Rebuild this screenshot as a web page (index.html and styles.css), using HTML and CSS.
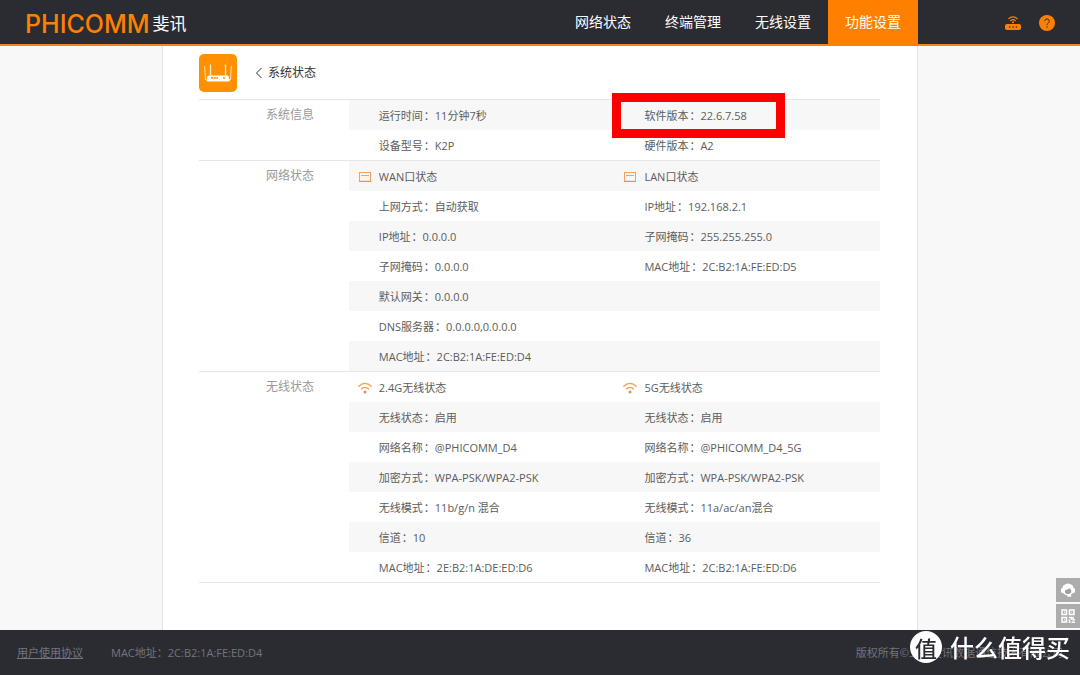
FILE: index.html
```html
<!DOCTYPE html>
<html lang="zh-CN">
<head>
<meta charset="utf-8">
<meta name="viewport" content="width=device-width, initial-scale=1">
<title>系统状态</title>
<link rel="stylesheet" href="styles.css">
</head>
<body>
<header class="topbar">
  <a class="logo" href="#"><span class="logo-latin">PHICOMM</span><span class="logo-cn">斐讯</span></a>
  <nav class="nav">
    <a href="#">网络状态</a>
    <a href="#">终端管理</a>
    <a href="#">无线设置</a>
    <a class="active" href="#">功能设置</a>
  </nav>
  <div class="tools">
    <a href="#" aria-label="路由器">
      <svg width="16" height="16" viewBox="0 0 16 16" fill="none" stroke="#ff8000" stroke-width="1.2" stroke-linecap="round">
        <path d="M3.8 3.6a6 6 0 0 1 8.4 0M5.6 5.6a3.6 3.6 0 0 1 4.8 0"/>
        <circle cx="8" cy="7.2" r="1" fill="#ff8000" stroke="none"/>
        <rect x="0" y="9" width="16" height="6" rx="2" fill="#ff8000" stroke="none"/>
        <path d="M4.6 12h.1M8 12h.1M11.3 12h.1" stroke="#2b2c32" stroke-width="1.5"/>
      </svg>
    </a>
    <a href="#" aria-label="帮助">
      <svg width="16" height="16" viewBox="0 0 16 16" fill="none" stroke="#2b2c32">
        <circle cx="8" cy="8" r="8" fill="#ff8000" stroke="none"/>
        <path d="M5.7 6.2a2.3 2.3 0 1 1 3.5 2C8.3 8.800 8 9.200 8 10.200"/>
        <circle cx="8" cy="12" r=".7" fill="#2b2c32" stroke="none"/>
      </svg>
    </a>
  </div>
</header>

<main class="panel">
  <div class="heading">
    <svg width="38" height="38" viewBox="0 0 38 38">
      <rect width="38" height="38" rx="5" fill="#ff9100"/>
      <path d="M8 24.500h22l1.200 1.500-1 1.500H8.200L7 26z" fill="#fff"/>
      <rect x="8" y="21.500" width="22" height="5" rx="2" fill="#fff"/>
      <path d="M11.500 10.500v11.500M26.500 10.500v11.500" stroke="#ffe9cc" stroke-width="1.300"/>
      <path d="M5.700 12l.8 14M32.300 12l-.8 14" stroke="#ffe0b8" stroke-width="1"/>
      <path d="M12 24h7" stroke="#ff7a00" stroke-width="1.500" stroke-dasharray="2 .7"/>
      <circle cx="25" cy="24" r="1" fill="#ff9100"/>
    </svg>
    <a class="back" href="#">
      <svg width="8" height="12" viewBox="0 0 8 12" fill="none" stroke="#333"><path d="M6.500 1L1.500 6l5 5"/></svg>
      <span>系统状态</span>
    </a>
  </div>

  <section class="group">
    <h2>系统信息</h2>
    <div class="rows odd">
      <div class="row"><p>运行时间<i>：</i>11分钟7秒</p><p class="marked">软件版本<i>：</i>22.6.7.58</p></div>
      <div class="row"><p>设备型号<i>：</i>K2P</p><p>硬件版本<i>：</i>A2</p></div>
    </div>
  </section>

  <section class="group">
    <h2>网络状态</h2>
    <div class="rows odd">
      <div class="row">
        <h3><svg width="14" height="12" viewBox="0 0 14 12" fill="none" stroke="#f3a064"><rect x="1.500" y="1.500" width="11" height="9"/><path d="M3 4.500h8"/><path d="M1 10.300h12" stroke="#f08b43"/></svg>WAN口状态</h3>
        <h3><svg width="14" height="12" viewBox="0 0 14 12" fill="none" stroke="#f3a064"><rect x="1.500" y="1.500" width="11" height="9"/><path d="M3 4.500h8"/><path d="M1 10.300h12" stroke="#f08b43"/></svg>LAN口状态</h3>
      </div>
      <div class="row"><p>上网方式<i>：</i>自动获取</p><p>IP地址<i>：</i>192.168.2.1</p></div>
      <div class="row"><p>IP地址<i>：</i>0.0.0.0</p><p>子网掩码<i>：</i>255.255.255.0</p></div>
      <div class="row"><p>子网掩码<i>：</i>0.0.0.0</p><p>MAC地址<i>：</i>2C:B2:1A:FE:ED:D5</p></div>
      <div class="row"><p>默认网关<i>：</i>0.0.0.0</p></div>
      <div class="row"><p>DNS服务器<i>：</i>0.0.0.0,0.0.0.0</p></div>
      <div class="row"><p>MAC地址<i>：</i>2C:B2:1A:FE:ED:D4</p></div>
    </div>
  </section>

  <section class="group">
    <h2>无线状态</h2>
    <div class="rows even">
      <div class="row">
        <h3><svg width="14" height="12" viewBox="0 0 14 12" fill="none" stroke="#f3a05c" stroke-width="1.300" stroke-linecap="round"><path d="M.8 4.200C4.300.4 9.700.4 13.200 4.200M3.500 7c2-2.300 5-2.300 7 0"/><circle cx="7" cy="10" r="1.500" fill="#f08b43" stroke="none"/></svg>2.4G无线状态</h3>
        <h3><svg width="14" height="12" viewBox="0 0 14 12" fill="none" stroke="#f3a05c" stroke-width="1.300" stroke-linecap="round"><path d="M.8 4.200C4.300.4 9.700.4 13.200 4.200M3.500 7c2-2.300 5-2.300 7 0"/><circle cx="7" cy="10" r="1.500" fill="#f08b43" stroke="none"/></svg>5G无线状态</h3>
      </div>
      <div class="row"><p>无线状态<i>：</i>启用</p><p>无线状态<i>：</i>启用</p></div>
      <div class="row"><p>网络名称<i>：</i>@PHICOMM_D4</p><p>网络名称<i>：</i>@PHICOMM_D4_5G</p></div>
      <div class="row"><p>加密方式<i>：</i>WPA-PSK/WPA2-PSK</p><p>加密方式<i>：</i>WPA-PSK/WPA2-PSK</p></div>
      <div class="row"><p>无线模式<i>：</i>11b/g/n 混合</p><p>无线模式<i>：</i>11a/ac/an混合</p></div>
      <div class="row"><p>信道<i>：</i>10</p><p>信道<i>：</i>36</p></div>
      <div class="row"><p>MAC地址<i>：</i>2E:B2:1A:DE:ED:D6</p><p>MAC地址<i>：</i>2C:B2:1A:FE:ED:D6</p></div>
    </div>
  </section>
</main>

<footer class="footer">
  <a href="#">用户使用协议</a>
  <span>MAC地址：2C:B2:1A:FE:ED:D4</span>
  <span class="copyright">版权所有©上海斐讯数据通信技术有限公司</span>
</footer>

<div class="floating">
  <button type="button" aria-label="客服">
    <svg width="14" height="14" viewBox="0 0 14 14">
      <circle cx="7" cy="6.500" r="6" fill="#fff"/>
      <rect x="0" y="5" width="3" height="5" rx="1.500" fill="#fff"/><rect x="11" y="5" width="3" height="5" rx="1.500" fill="#fff"/>
      <path d="M4 7.500l5-2.200 1.200 2v2.200L8 11H5.600L4 9.500z" fill="#a0a0a0"/>
      <path d="M7 12.800h2.500" stroke="#fff" stroke-width="1.800" stroke-linecap="round"/>
    </svg>
  </button>
  <button type="button" aria-label="二维码">
    <svg width="14" height="14" viewBox="0 0 14 14" fill="none" stroke="#fff" stroke-width="1.500">
      <path d="M1 1h4.500v4.500H1zM8.500 1H13v4.500H8.500zM1 8.500h4.500V13H1z"/>
      <path d="M3 3.300h.8M10.500 3.300h.8M3 10.800h.8M7.800 8.500h2.500v2.200M8.500 10.500V14M12 7.800v3h2M10.500 13.200H14"/>
    </svg>
  </button>
</div>

<div class="watermark"><span class="seal">值</span><span>什么值得买</span></div>
</body>
</html>
```

FILE: styles.css
```css
*, *::after { box-sizing: border-box; }

body {
  margin: 0;
  min-height: 100vh;
  display: flex;
  flex-direction: column;
  background: #f8f8f8;
  color: #5c5c5c;
  font: 11px/32px "Open Sans", "Noto Sans CJK SC", sans-serif;
}

a { color: inherit; text-decoration: none; }
svg { display: block; flex: none; }
h2, h3, p { margin: 0; font-size: 11px; font-weight: 400; }

/* colon between a label and its value */
i { margin-left: 1px; font-style: normal; }

.topbar {
  display: flex;
  height: 46px;
  background: #2b2c32;
  border-bottom: 2px solid #fb8418;
}

.logo {
  display: flex;
  align-items: center;
  gap: 3px;
  padding-left: 25px;
  padding-top: 3px;
}
.logo-latin { color: #ff8000; font: 500 25px/44px Inter, sans-serif; }
.logo-cn { color: #fff; font-size: 17px; }

.nav { display: flex; margin-left: auto; }
.nav a {
  width: 90px;
  height: 46px;
  color: #fff;
  font-size: 14px;
  line-height: 44px;
  text-align: center;
}
.nav .active { background: #ff8000; }

.tools {
  display: flex;
  align-items: center;
  justify-content: flex-end;
  gap: 18px;
  width: 15%;
  padding-right: 25px;
  padding-top: 2px;
}

.panel {
  flex: 1;
  width: 70%;
  margin: 0 auto;
  padding: 0 37px 47px 36px;
  background: #fff;
  border: solid #e2e2e2;
  border-width: 0 1px;
}

.heading {
  display: flex;
  align-items: center;
  gap: 18px;
  height: 53px;
}
.back { display: flex; align-items: center; gap: 5px; color: #333; font-size: 12px; }

.group {
  display: flex;
  border-top: 1px solid #e6e6e6;
}
.group:last-child { border-bottom: 1px solid #e6e6e6; }
.group h2 {
  width: 22%;
  padding-left: 67px;
  color: #999;
  font-size: 12px;
  line-height: 30px;
}
.rows { flex: 1; }
.row { display: grid; grid-template-columns: 1fr 1fr; height: 30px; }
.row p { padding-left: 30px; }
.row h3 { display: flex; align-items: center; padding-left: 9px; }
.row h3 svg { margin-right: 7px; }
.odd .row:nth-child(odd), .even .row:nth-child(even) { background: #f7f7f7; }

.marked { position: relative; }
.marked::after {
  content: "";
  position: absolute;
  top: -7px;
  left: -2px;
  width: 173px;
  height: 45px;
  border: 9px solid #f00;
}

.footer {
  display: flex;
  gap: 28px;
  padding: 0 17px;
  background: #2b2c32;
  color: #72757d;
  line-height: 45px;
}
.footer a { text-decoration: underline; }
.footer .copyright { margin-left: auto; }

.floating {
  position: fixed;
  right: 0;
  bottom: 47px;
  display: grid;
  gap: 2px;
}
.floating button {
  display: grid;
  place-items: center;
  width: 24px;
  height: 24px;
  padding: 0;
  border: 0;
  background: #acacac;
}

.watermark {
  position: fixed;
  right: 10px;
  bottom: 12px;
  display: flex;
  align-items: center;
  gap: 8px;
  color: #fff;
  font: 500 24px/32px "Noto Sans CJK SC", sans-serif;
}
.seal {
  width: 32px;
  height: 32px;
  border-radius: 50%;
  background: #fff;
  color: #2b2c32;
  font-size: 22px;
  text-align: center;
}
```
